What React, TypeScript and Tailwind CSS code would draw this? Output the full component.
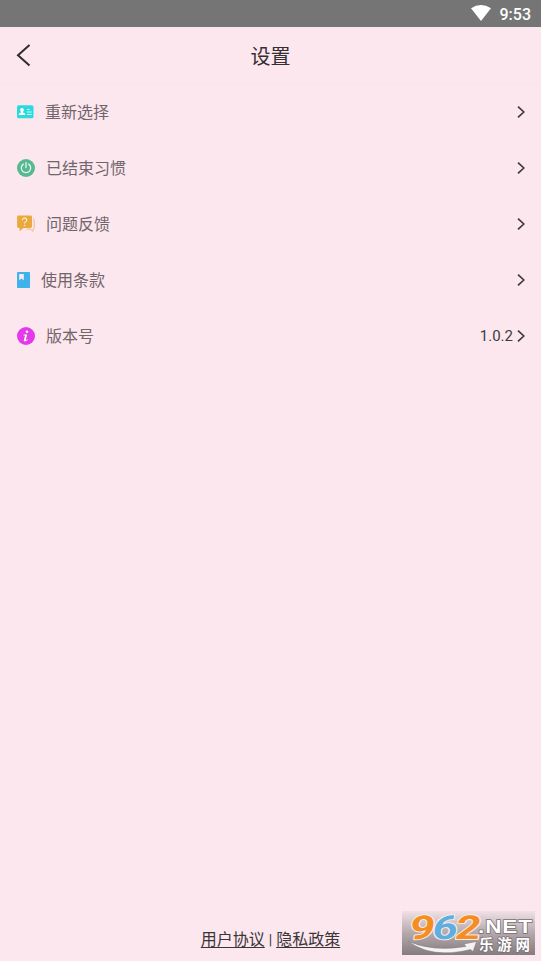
import type { ReactNode } from 'react';

interface SettingRow {
    label: string;
    icon: ReactNode;
    value?: string;
}

const ChevronRight = () => (
    <svg width="8" height="12" viewBox="0 0 8 12" fill="none" stroke="#413b3f" strokeWidth="1.7">
        <path d="M1 .6 6.800 6 1 11.400" />
    </svg>
);

const CardIcon = () => (
    <svg width="17" height="14" viewBox="0 0 17 14">
        <rect y="0.3" width="16.500" height="13" rx="1.6" fill="#2bdade" />
        <circle cx="5" cy="4.900" r="1.900" fill="#fff" />
        <path d="M4.100 6h1.800v1.400l2.300 1v1.700H1.900V8.400l2.200-1z" fill="#fff" />
        <path d="M10 4.500h2.600M10 7h4.800M10 9.500h4.800" stroke="#c9f7f7" strokeWidth="1" />
    </svg>
);

const PowerIcon = () => (
    <svg width="18" height="18" viewBox="0 0 18 18">
        <circle cx="9" cy="9" r="9" fill="#57b894" />
        <path d="M6.300 5.100a4.700 4.700 0 1 0 5.400 0M9 3.600v5" fill="none" stroke="#e9f7f1" strokeWidth="1.3" strokeLinecap="round" />
    </svg>
);

const FeedbackIcon = () => (
    <svg width="18" height="18" viewBox="0 0 18 18">
        <path d="M1.500.5h12A1.400 1.400 0 0 1 15 1.900v9.700a1.400 1.400 0 0 1-1.400 1.400H6.400L2.600 16.300V13H1.500A1.400 1.400 0 0 1 .1 11.600V1.900A1.400 1.400 0 0 1 1.500.5z" fill="#e9a93c" />
        <path d="M16 3.800q1.200.2 1.200 1.300v7.900q0 1.100-1.200 1.100v2.200l-2.800-2.200H9.500" fill="none" stroke="#efbd78" strokeWidth="1" />
        <path d="M5.400 5.300c0-3 4.400-2.700 4.400-.2 0 1.600-2.200 1.600-2.200 3.500" fill="none" stroke="#fdf0dc" strokeWidth="1.1" />
        <circle cx="7.600" cy="10.400" r="0.700" fill="#fdf0dc" />
    </svg>
);

const BookIcon = () => (
    <svg width="13" height="16" viewBox="0 0 13 16">
        <rect width="13" height="16" rx="0.8" fill="#3eb3eb" />
        <path d="M2.200 2h4.600v6.200L4.500 6.400 2.200 8.200z" fill="#fbeaf1" />
    </svg>
);

const InfoIcon = () => (
    <svg width="18" height="18" viewBox="0 0 18 18">
        <circle cx="9" cy="9" r="9" fill="#e339e9" />
        <circle cx="10" cy="4.700" r="1.300" fill="#fff" />
        <path d="M6.700 7.600h3.500l-1.500 5.300q0 .5 1.700-.6l.3.500c-1.900 1.900-4.300 2.100-3.800.1l1.200-4.400H6.500z" fill="#fff" />
    </svg>
);

const rows: SettingRow[] = [
    { label: '重新选择', icon: <CardIcon /> },
    { label: '已结束习惯', icon: <PowerIcon /> },
    { label: '问题反馈', icon: <FeedbackIcon /> },
    { label: '使用条款', icon: <BookIcon /> },
    { label: '版本号', icon: <InfoIcon />, value: '1.0.2' },
];

const StatusBar = () => (
    <div className="flex h-[27px] shrink-0 items-center justify-end gap-[8px] bg-[#757575] pr-[10px] text-white">
        <svg width="20" height="16" viewBox="0 0 20 16" fill="#fff" className="mr-[1px] -mt-[1px]">
            <path d="M0 3.300Q10-3.300 20 3.300L10 16z" />
        </svg>
        <span className="pt-[2px] text-[16px] leading-none font-medium">9:53</span>
    </div>
);

const Watermark = () => (
    <div className="absolute right-[6px] bottom-[6px] h-[44px] w-[133px]">
        <svg width="133" height="44" viewBox="0 0 133 44">
            <defs>
                <linearGradient id="plate" x1="0" y1="0" x2="0" y2="1">
                    <stop offset="0" stopColor="#f0e1e6" />
                    <stop offset="0.5" stopColor="#b4a8ac" />
                    <stop offset="1" stopColor="#857c80" />
                </linearGradient>
            </defs>
            <rect width="133" height="44" fill="url(#plate)" />
            <path d="M6.500 30.500Q31 41 64 35.500L62 33l12.500-2.500-3.500 10-2.500-2Q30 48 6.500 30.500z" fill="#f5f2f3" stroke="#817a7e" strokeWidth="0.500" />
            <g
                fontFamily="Roboto, sans-serif"
                fontWeight="700"
                fontSize="33"
                stroke="#f8ece6"
                strokeWidth="2"
                paintOrder="stroke"
                strokeLinejoin="round"
                transform="translate(7 27.500) skewX(-10)"
            >
                <text x="-1" y="0" textLength="25" lengthAdjust="spacingAndGlyphs" fill="#f58d23">9</text>
                <text x="22" y="0" textLength="25" lengthAdjust="spacingAndGlyphs" fill="#5eafe0">6</text>
                <text x="45" y="0" textLength="25" lengthAdjust="spacingAndGlyphs" fill="#f58d23">2</text>
            </g>
            <g fill="#fff" stroke="#776f73" strokeWidth="1.400" paintOrder="stroke" fontWeight="700">
                <text x="76" y="22" fontFamily="'Liberation Sans', sans-serif" fontSize="19" letterSpacing="0.800" textLength="55" lengthAdjust="spacingAndGlyphs">.NET</text>
                <text x="77" y="38.500" fontFamily="'Noto Sans CJK SC', sans-serif" fontSize="14.500" textLength="51">乐游网</text>
            </g>
        </svg>
    </div>
);

export default function App() {
    return (
        <div className="relative flex h-screen w-full flex-col overflow-hidden bg-[#fce7ee] font-['Roboto','Noto_Sans_CJK_SC',sans-serif]">
            <StatusBar />
            <header className="grid h-[57px] shrink-0 grid-cols-[1fr_auto_1fr] items-center border-b border-[#f6e5eb] px-[16px]">
                <svg width="15" height="24" viewBox="0 0 15 24" fill="none" stroke="#302b2e" strokeWidth="2">
                    <path d="M13.500 2 2 12.200l11.500 10.300" />
                </svg>
                <h1 className="pt-[3px] text-[20px] leading-none text-[#332e31]">设置</h1>
                <span />
            </header>
            <main className="flex-1">
                {rows.map((row) => (
                    <div key={row.label} className="flex h-[56px] items-center border-b border-[#f9e5ec] pr-[16px] pl-[17px]">
                        <div className="flex flex-1 items-center gap-[11px]">
                            {row.icon}
                            <span className="pt-[2px] text-[16px] leading-none text-[#71656b]">{row.label}</span>
                        </div>
                        {row.value && <span className="mr-[4px] pt-[2px] text-[15px] leading-none text-[#413b3f]">{row.value}</span>}
                        <ChevronRight />
                    </div>
                ))}
            </main>
            <footer className="flex h-[43px] shrink-0 justify-center gap-[4px] text-[16px] leading-[44px] text-[#3b3538]">
                <a className="underline underline-offset-[2px]">用户协议</a>
                <span className="text-[14px]">|</span>
                <a className="underline underline-offset-[2px]">隐私政策</a>
            </footer>
            <Watermark />
        </div>
    );
}
